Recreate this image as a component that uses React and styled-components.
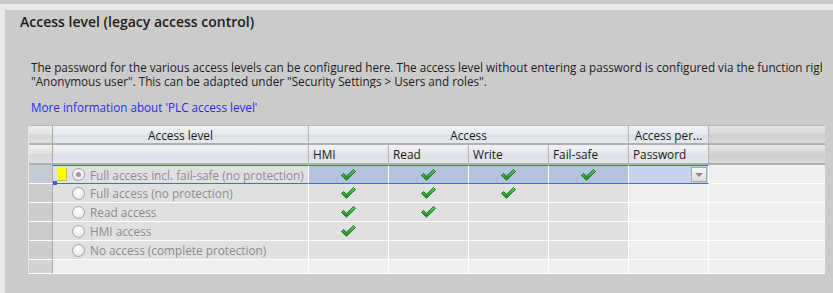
import React from 'react';
import styled, { createGlobalStyle, css } from 'styled-components';

const GlobalStyle = createGlobalStyle`
  html, body {
    margin: 0;
    padding: 0;
    background: #e9e9e9;
    font-family: 'Open Sans', 'Noto Sans', sans-serif;
  }
`;

const levels = [
  { label: 'Full access incl. fail-safe (no protection)', checks: [1, 1, 1, 1], selected: true },
  { label: 'Full access (no protection)', checks: [1, 1, 1, 0] },
  { label: 'Read access', checks: [1, 1, 0, 0] },
  { label: 'HMI access', checks: [1, 0, 0, 0] },
  { label: 'No access (complete protection)', checks: [0, 0, 0, 0] },
];

const Check = () => (
  <svg width="15" height="12" viewBox="0 0 15 12">
    <defs>
      <linearGradient id="ck" x1="0" y1="0" x2="0" y2="1">
        <stop offset="0" stopColor="#5fd35f" />
        <stop offset="1" stopColor="#1a8a1a" />
      </linearGradient>
    </defs>
    <polygon
      points="0.5,6.5 2.5,4.5 5.5,7.2 12.5,0.5 14.5,2.5 5.5,11.2"
      fill="url(#ck)"
      stroke="#0d5e12"
      strokeWidth="0.8"
      strokeLinejoin="round"
    />
  </svg>
);

const AccessLevelPanel = () => {
  return (
    <Page>
      <GlobalStyle />
      <TopStrip />
      <Panel>
        <Title>Access level (legacy access control)</Title>
        <Description>
          <p>
            The password for the various access levels can be configured here. The access level without entering a password is configured via the function right
          </p>
          <p>"Anonymous user". This can be adapted under "Security Settings &gt; Users and roles".</p>
        </Description>
        <InfoLink>More information about 'PLC access level'</InfoLink>

        <Grid>
          {/* header row 1 */}
          <CornerHead />
          <Head center>Access level</Head>
          <Head center span={4}>Access</Head>
          <Head center>Access per...</Head>
          <FillerHead />

          {/* header row 2 */}
          <CornerHead />
          <Head />
          <Head>HMI</Head>
          <Head>Read</Head>
          <Head>Write</Head>
          <Head>Fail-safe</Head>
          <Head>Password</Head>
          <FillerHead />

          {levels.map((lvl) => (
            <React.Fragment key={lvl.label}>
              <RowHead selected={lvl.selected}>
                {lvl.selected && <Handle />}
              </RowHead>
              <LevelCell selected={lvl.selected}>
                <Marker visible={lvl.selected} />
                <Radio checked={lvl.selected} />
                <span>{lvl.label}</span>
              </LevelCell>
              {lvl.checks.map((c, i) => (
                <AccessCell key={i} selected={lvl.selected}>
                  {c ? <Check /> : null}
                </AccessCell>
              ))}
              <PasswordCell selected={lvl.selected}>
                {lvl.selected && <DropButton />}
              </PasswordCell>
              <FillerCell />
            </React.Fragment>
          ))}

          {/* empty trailing row */}
          <RowHead last />
          <LevelCell last />
          <AccessCell last />
          <AccessCell last />
          <AccessCell last />
          <AccessCell last />
          <PasswordCell />
          <FillerCell />
        </Grid>
      </Panel>
    </Page>
  );
};

export default function App() {
  return <AccessLevelPanel />;
}

// custom styled components
const Page = styled.div`
  width: 833px;
  height: 293px;
  overflow: hidden;
  background: #e9e9e9;
`;

const TopStrip = styled.div`
  height: 4px;
  background: #c9c9c9;
  margin-bottom: 6px;
`;

const Panel = styled.div`
  margin-left: 5px;
  height: 283px;
  background: #cbcbcb;
  overflow: hidden;
  padding-top: 3px;
  box-sizing: border-box;
`;

const Title = styled.h2`
  margin: 0;
  padding-left: 15px;
  font-size: 14px;
  font-weight: 600;
  line-height: 18px;
  color: #1c1c1c;
  white-space: nowrap;
`;

const Description = styled.div`
  margin-top: 29px;
  padding-left: 26px;
  width: 817px;
  box-sizing: border-box;
  overflow: hidden;
  font-size: 11.7px;
  line-height: 14px;
  color: #1e1e1e;
  white-space: nowrap;

  p {
    margin: 0;
    height: 14px;
  }
`;

const InfoLink = styled.a`
  display: block;
  margin-top: 12px;
  padding-left: 26px;
  font-size: 11.7px;
  line-height: 14px;
  color: #2b2bf0;
  cursor: pointer;
`;

const Grid = styled.div`
  margin: 11px 0 0 23px;
  width: 796px;
  display: grid;
  grid-template-columns: 24px 256px repeat(5, 80px) 116px;
  grid-template-rows: 19px 20px repeat(5, 19px) 14px;
  border-top: 1px solid #b9b9b9;
  border-left: 1px solid #e6e6e6;
  box-sizing: border-box;
  font-size: 11.8px;
`;

const headGradient = css`
  background: linear-gradient(#f1f2f5 0%, #e6e9ee 45%, #dde1e7 55%, #e4e7ec 100%);
`;

const CornerHead = styled.div`
  background: linear-gradient(#efefef 0%, #e4e4e4 45%, #d6d6d6 55%, #dedede 100%);
  border-right: 1px solid #a9a9a9;
  border-bottom: 2px solid #b0b0b0;
  box-sizing: border-box;
`;

const Head = styled.div`
  ${headGradient};
  grid-column: span ${({ span }) => span || 1};
  display: flex;
  align-items: center;
  justify-content: ${({ center }) => (center ? 'center' : 'flex-start')};
  padding: 0 4px;
  border-right: 1px solid #b5b5b5;
  border-bottom: 2px solid #b0b0b0;
  box-sizing: border-box;
  color: #1a1a1a;
  white-space: nowrap;
  overflow: hidden;
`;

const FillerHead = styled.div`
  background: linear-gradient(#e6e6e6 0%, #dadada 40%, #cfcfcf 55%, #d9d9d9 100%);
  border-bottom: 2px solid #b0b0b0;
  box-sizing: border-box;
`;

const selectedBorder = css`
  border-top: 1px solid #3a6fd8;
  border-bottom: 1px solid #3a6fd8;
`;

const BodyCell = styled.div`
  box-sizing: border-box;
  border-right: 1px solid #ffffff;
  border-bottom: 1px solid #ffffff;
  display: flex;
  align-items: center;
  ${({ selected }) => selected && selectedBorder};
`;

const RowHead = styled(BodyCell)`
  position: relative;
  background: ${({ selected, last }) => (selected ? '#c3ccd7' : last ? '#d3d3d3' : '#cdcdcd')};
  border-right: 1px solid #a8a8a8;
  border-top: none;
  border-bottom: 1px solid #ffffff;
`;

const Handle = styled.span`
  position: absolute;
  right: -5px;
  bottom: -2px;
  width: 4px;
  height: 4px;
  background: #2f64d6;
  z-index: 2;
`;

const LevelCell = styled(BodyCell)`
  background: ${({ last }) => (last ? '#efefef' : '#e0e0e0')};
  padding-left: 4px;
  color: #8c8c8c;
  white-space: nowrap;
  overflow: hidden;
  gap: 5px;
`;

const Marker = styled.span`
  width: 10px;
  height: 13px;
  box-sizing: border-box;
  background: ${({ visible }) => (visible ? '#ffff00' : 'transparent')};
  border-right: 1px solid ${({ visible }) => (visible ? '#c9c236' : 'transparent')};
  border-bottom: 1px solid ${({ visible }) => (visible ? '#c9c236' : 'transparent')};
  flex: none;
`;

const Radio = styled.span`
  width: 13px;
  height: 13px;
  box-sizing: border-box;
  border-radius: 50%;
  border: 1px solid #a3a3a3;
  background: radial-gradient(circle at 50% 35%, #ffffff 0%, #f0f0f0 55%, #d8d8d8 100%);
  flex: none;
  display: flex;
  align-items: center;
  justify-content: center;

  &::after {
    content: '';
    width: 5px;
    height: 5px;
    border-radius: 50%;
    background: ${({ checked }) => (checked ? '#9a9a9a' : 'transparent')};
  }
`;

const AccessCell = styled(BodyCell)`
  justify-content: center;
  background: ${({ selected, last }) => (selected ? '#b4c3dd' : last ? '#efefef' : '#e0e0e0')};
`;

const PasswordCell = styled(BodyCell)`
  justify-content: flex-end;
  padding-right: 1px;
  background: ${({ selected }) => (selected ? '#c6d4ee' : '#efefef')};
`;

const DropButton = styled.span`
  width: 16px;
  height: 15px;
  box-sizing: border-box;
  border: 1px solid #a6a6a6;
  background: linear-gradient(#f7f7f7, #dedede);
  display: flex;
  align-items: center;
  justify-content: center;

  &::after {
    content: '';
    border-left: 4px solid transparent;
    border-right: 4px solid transparent;
    border-top: 4px solid #8a8a8a;
  }
`;

const FillerCell = styled(BodyCell)`
  background: #efefef;
  border-right: none;
`;
